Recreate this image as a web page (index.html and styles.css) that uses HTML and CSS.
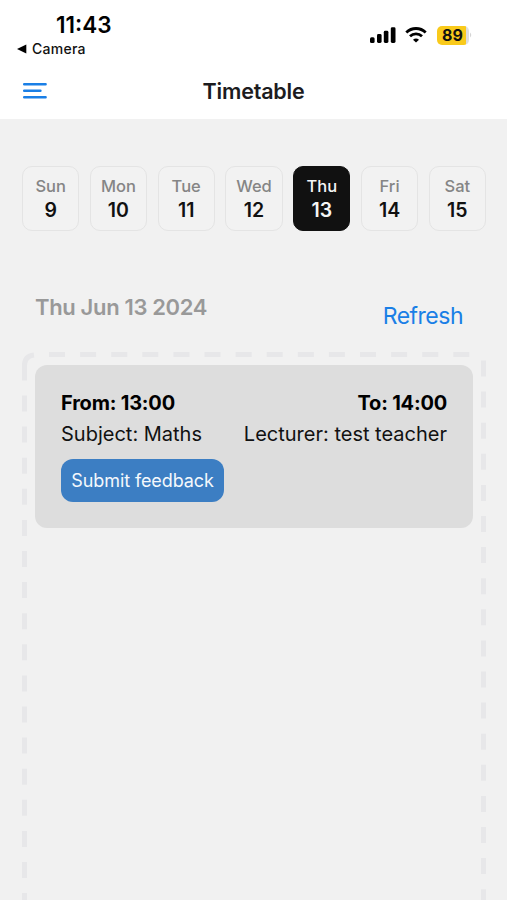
FILE: index.html
```html
<!DOCTYPE html>
<html lang="en">
<head>
<meta charset="utf-8">
<meta name="viewport" content="width=device-width, initial-scale=1">
<title>Timetable</title>
<link rel="stylesheet" href="styles.css">
</head>
<body>
<div class="screen">
  <div class="status">
    <div class="status-left">
      <div class="clock">11:43</div>
      <div class="back"><svg width="10" height="10" viewBox="0 0 10 10"><path d="M0 5 9.3.6v8.8z"/></svg><span>Camera</span></div>
    </div>
    <div class="status-right">
      <svg class="signal" width="26" height="18" viewBox="0 0 26 18"><rect x="0" y="11.2" width="4.6" height="5.8" rx="1.5"/><rect x="7" y="8" width="4.6" height="9" rx="1.4"/><rect x="13.8" y="4.8" width="4.6" height="12.2" rx="1.4"/><rect x="20.8" y="1.3" width="4.7" height="15.7" rx="1.4"/></svg>
      <svg class="wifi" width="22" height="16" viewBox="0 0 22 16"><path d="M1.3 5.4a14 14 0 0 1 19.4 0M5 9.2a8.8 8.8 0 0 1 12 0" fill="none" stroke="#000" stroke-width="2.8"/><path d="M8 12.7a4.8 4.8 0 0 1 6 0L11 15.6z"/></svg>
      <div class="battery">89</div>
      <svg class="cap" width="3" height="6" viewBox="0 0 3 6"><path d="M0 .5q2.5 2.5 0 5z" fill="#d4d4d4"/></svg>
    </div>
  </div>
  <header class="header">
    <svg class="menu" width="25" height="18" viewBox="0 0 25 18"><path d="M2.2 2.2h21.4M2.2 8.7h16.2M2.2 15.2h21.4" stroke="#1a7fe6" stroke-width="2.5" stroke-linecap="round"/></svg>
    <h1>Timetable</h1>
  </header>
  <main>
    <div class="week">
      <div class="day"><span>Sun</span><b>9</b></div>
      <div class="day"><span>Mon</span><b>10</b></div>
      <div class="day"><span>Tue</span><b>11</b></div>
      <div class="day"><span>Wed</span><b>12</b></div>
      <div class="day active"><span>Thu</span><b>13</b></div>
      <div class="day"><span>Fri</span><b>14</b></div>
      <div class="day"><span>Sat</span><b>15</b></div>
    </div>
    <div class="subhead">
      <h2>Thu Jun 13 2024</h2>
      <a class="refresh">Refresh</a>
    </div>
    <section class="agenda">
      <svg class="outline" width="465" height="548" viewBox="0 0 465 548"><path d="M2.5 28.5V13.5Q2.5 4 12 3"/><path class="dash" d="M27 2.5H449"/><path class="dash" d="M461.5 8.5V548"/><path class="dash" d="M2.5 43.5V548"/></svg>
      <article class="lesson">
        <div class="row times"><span class="from">From: 13:00</span><span class="to">To: 14:00</span></div>
        <div class="row"><span class="subject">Subject: Maths</span><span class="lecturer">Lecturer: test teacher</span></div>
        <button>Submit feedback</button>
      </article>
    </section>
  </main>
</div>
</body>
</html>
```
FILE: styles.css
```css
* { box-sizing: border-box; }
body { margin: 0; background: #f1f1f1; font-family: Inter, "Liberation Sans", sans-serif; color: #111; }
.screen { height: 900px; overflow: hidden; }
svg { display: block; }
.status { height: 64px; background: #fff; display: flex; justify-content: space-between; }
.status-left { padding: 11px 0 0 17px; }
.clock { padding-left: 39px; font-size: 22.5px; line-height: 28px; font-weight: 600; color: #000; }
.back { display: flex; align-items: center; gap: 5px; font-size: 14px; line-height: 20px; font-weight: 500; letter-spacing: .25px; }
.status-right { display: flex; align-items: center; height: 20px; margin: 25px 34px 0 0; }
.signal { margin-top: -1px; }
.wifi { margin: -1px 10px 0 9px; }
.battery { width: 32px; height: 19px; border-radius: 5px; background: linear-gradient(90deg, #f9ca1b 29px, #dedede 29px); font-size: 16px; line-height: 19px; font-weight: 700; text-align: center; padding-right: 1px; }
.cap { margin-left: 1px; }
.header { height: 55px; background: #fff; display: grid; grid-template-columns: 25px 1fr 25px; align-items: center; padding: 0 22px 1px; }
.header h1 { margin: 0; text-align: center; font-size: 21.5px; line-height: 28px; font-weight: 600; letter-spacing: -.2px; color: #1c1c1e; }
main { padding: 47px 21px 0 22px; }
.week { display: grid; grid-template-columns: repeat(7, 1fr); gap: 10.5px; height: 65px; }
.day { border: 1px solid #e4e4e4; border-radius: 10px; background: #f2f2f2; display: flex; flex-direction: column; align-items: center; padding-top: 7px; }
.day span { font-size: 16.5px; line-height: 24px; font-weight: 500; color: #858585; }
.day b { font-size: 19.5px; line-height: 25px; font-weight: 600; }
.day.active { background: #111; border-color: #111; }
.day.active span, .day.active b { color: #f5f5f5; }
.subhead { display: flex; justify-content: space-between; height: 121px; padding: 61px 23px 0 13px; }
.subhead h2 { margin: 0; font-size: 22px; line-height: 30px; font-weight: 600; letter-spacing: -.35px; color: #999; }
.refresh { color: #1a7fe6; font-size: 23px; line-height: 30px; margin-top: 9px; letter-spacing: -.5px; }
.agenda { position: relative; height: 548px; padding: 13px 13px 0; }
.outline { position: absolute; inset: 0; fill: none; stroke: #e7e7e9; stroke-width: 5px; }
.dash { stroke-dasharray: 16 15.1; }
.lesson { position: relative; height: 163px; border-radius: 12px; background: #ddd; padding: 23px 26px; color: #111; }
.row { display: flex; justify-content: space-between; font-size: 20px; line-height: 31px; }
.times { font-weight: 700; color: #000; letter-spacing: -.2px; }
button { display: block; margin: 9px 0 0; width: 163px; height: 43px; padding: 0; border: 0; border-radius: 12px; background: #3c7ec3; color: #f4f8fc; font: 18px/43px Inter, sans-serif; letter-spacing: -.1px; white-space: nowrap; }
```
